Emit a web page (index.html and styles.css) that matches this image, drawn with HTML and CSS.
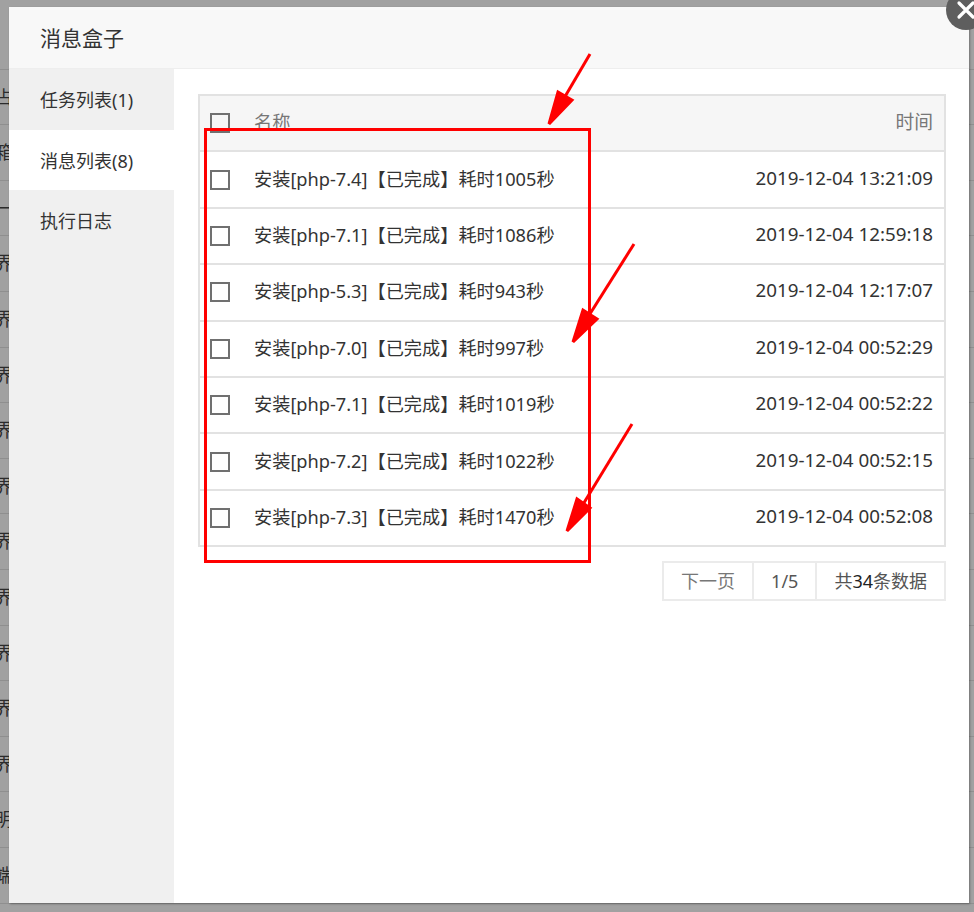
FILE: index.html
```html
<!DOCTYPE html>
<html>
<head>
  <meta charset="UTF-8">
  <title>消息盒子</title>
  <link rel="stylesheet" href="styles.css">
</head>
<body>
  <div class="backdrop">
    <div class="backdrop-row"></div>
    <div class="backdrop-row">占</div>
    <div class="backdrop-row">箱</div>
    <div class="backdrop-row">一</div>
    <div class="backdrop-row">界</div>
    <div class="backdrop-row">界</div>
    <div class="backdrop-row">界</div>
    <div class="backdrop-row">界</div>
    <div class="backdrop-row">界</div>
    <div class="backdrop-row">界</div>
    <div class="backdrop-row">界</div>
    <div class="backdrop-row">界</div>
    <div class="backdrop-row">界</div>
    <div class="backdrop-row">界</div>
    <div class="backdrop-row">明</div>
    <div class="backdrop-row">端</div>
  </div>

  <div class="layer">
    <div class="layer-title">消息盒子</div>
    <div class="layer-body">
      <ul class="tabs">
        <li>任务列表(1)</li>
        <li class="active">消息列表(8)</li>
        <li>执行日志</li>
      </ul>
      <div class="panel">
        <div class="table">
          <div class="tr th"><span class="cb"></span><span class="name">名称</span><span class="time">时间</span></div>
          <div class="tr"><span class="cb"></span><span class="name">安装[php-7.4]【已完成】耗时1005秒</span><span class="time">2019-12-04 13:21:09</span></div>
          <div class="tr"><span class="cb"></span><span class="name">安装[php-7.1]【已完成】耗时1086秒</span><span class="time">2019-12-04 12:59:18</span></div>
          <div class="tr"><span class="cb"></span><span class="name">安装[php-5.3]【已完成】耗时943秒</span><span class="time">2019-12-04 12:17:07</span></div>
          <div class="tr"><span class="cb"></span><span class="name">安装[php-7.0]【已完成】耗时997秒</span><span class="time">2019-12-04 00:52:29</span></div>
          <div class="tr"><span class="cb"></span><span class="name">安装[php-7.1]【已完成】耗时1019秒</span><span class="time">2019-12-04 00:52:22</span></div>
          <div class="tr"><span class="cb"></span><span class="name">安装[php-7.2]【已完成】耗时1022秒</span><span class="time">2019-12-04 00:52:15</span></div>
          <div class="tr"><span class="cb"></span><span class="name">安装[php-7.3]【已完成】耗时1470秒</span><span class="time">2019-12-04 00:52:08</span></div>
        </div>
        <div class="pager">
          <span class="page-cell next">下一页</span>
          <span class="page-cell">1/5</span>
          <span class="page-cell">共<b>34</b>条数据</span>
        </div>
      </div>
    </div>
    <a class="close-btn">
      <svg width="40" height="40" viewBox="0 0 40 40">
        <path d="M13 13 L27 27 M27 13 L13 27" stroke="#fff" stroke-width="3.2" stroke-linecap="round" fill="none"/>
      </svg>
    </a>
  </div>

  <!-- red annotations drawn over the screenshot -->
  <svg class="marks" width="974" height="912" viewBox="0 0 974 912">
    <rect x="205.5" y="129.5" width="384" height="432" fill="none" stroke="#f00" stroke-width="3"/>
    <g stroke="#f00" stroke-width="3" fill="#f00">
      <line x1="590" y1="54" x2="563" y2="100"/>
      <polygon points="549,124 558,92 572,100"/>
      <line x1="634" y1="244" x2="588" y2="317"/>
      <polygon points="573,342 583,310 597,319"/>
      <line x1="632" y1="424" x2="582" y2="506"/>
      <polygon points="567,531 577,499 590,508"/>
    </g>
  </svg>
</body>
</html>
```

FILE: styles.css
```css
body {
  margin: 0;
  height: 912px;
  overflow: hidden;
  background: #a1a1a1;
  font-family: "Noto Sans", "Noto Sans CJK SC", sans-serif;
  color: #333;
}
.backdrop {
  padding-top: 14px;
}
.backdrop-row {
  height: 54.6px;
  line-height: 55px;
  border-bottom: 1px solid #8f8f8f;
  font-size: 18px;
  color: #2b2b2b;
  text-indent: -5px;
}
.layer {
  position: absolute;
  left: 9px;
  top: 7px;
  width: 960px;
  height: 896px;
  background: #fff;
  display: flex;
  flex-direction: column;
  box-shadow: 1px 1px 2px rgba(0, 0, 0, 0.3);
}
.layer-title {
  height: 61px;
  line-height: 63px;
  padding-left: 31px;
  background: #f8f8f8;
  border-bottom: 1px solid #eee;
  font-size: 21px;
  color: #333;
}
.layer-body {
  flex: 1;
  display: flex;
}
.tabs {
  width: 165px;
  margin: 0;
  padding: 0;
  list-style: none;
  background: #f0f0f0;
}
.tabs li {
  height: 60px;
  line-height: 63px;
  padding-left: 31px;
  font-size: 18px;
  color: #333;
}
.tabs li:first-child {
  height: 61px;
}
.tabs li.active {
  background: #fff;
}
.panel {
  flex: 1;
  padding: 25px 23px 0 24px;
}
.table {
  border: 2px solid #e2e2e2;
  border-bottom: 0;
  font-size: 18.2px;
}
.tr {
  display: flex;
  align-items: center;
  height: 54.4px;
  border-bottom: 2px solid #e2e2e2;
  color: #333;
}
.th {
  background: #f6f6f6;
  color: #777;
}
.cb {
  flex: none;
  width: 16px;
  height: 16px;
  border: 2px solid #707070;
  margin-left: 10px;
  margin-right: 24px;
}
.name {
  flex: 1;
  padding-bottom: 4px;
}
.time {
  padding-right: 11px;
  padding-bottom: 4px;
  font-size: 18.8px;
}
.pager {
  display: flex;
  justify-content: flex-end;
  margin-top: 14px;
  font-size: 18px;
}
.page-cell {
  height: 36px;
  line-height: 36px;
  padding: 0 17px;
  border: 2px solid #ebebeb;
  margin-left: -2px;
  color: #555;
}
.page-cell.next {
  color: #777;
}
.page-cell b {
  font-weight: normal;
  color: #222;
}
.close-btn {
  position: absolute;
  left: 937px;
  top: -17px;
  width: 40px;
  height: 40px;
  border-radius: 50%;
  background: #5e5e5e;
}
.close-btn svg {
  display: block;
}
.marks {
  position: absolute;
  left: 0;
  top: 0;
}
```
